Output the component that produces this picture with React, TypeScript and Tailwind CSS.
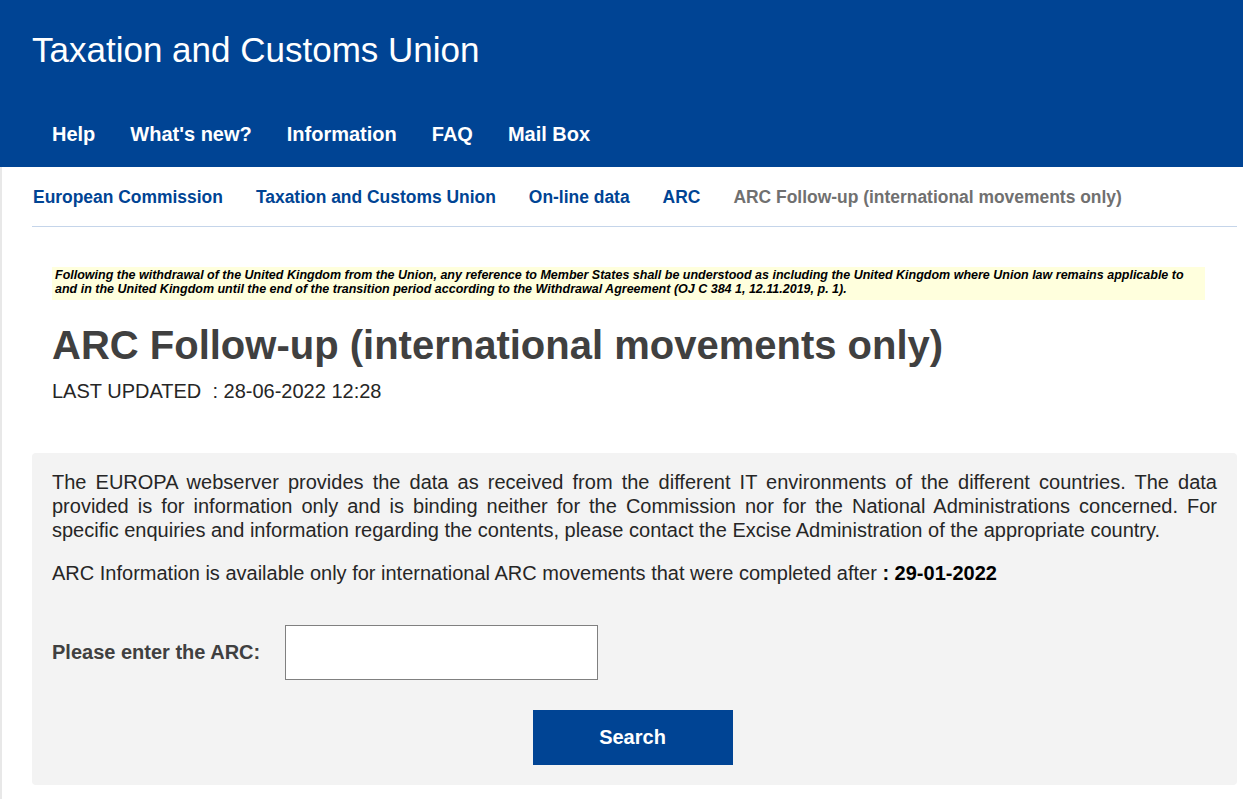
import React from "react";

const CRUMBS = ["European Commission", "Taxation and Customs Union", "On-line data", "ARC"];
const MENU = ["Help", "What's new?", "Information", "FAQ", "Mail Box"];

export default function App() {
  return (
    <div className="font-['Liberation_Sans',Arial,sans-serif] text-[#404040] bg-white h-[799px] overflow-hidden">
      {/* Header */}
      <header className="bg-[#004494] h-[167px] text-white">
        <div className="pl-[32px] pt-[30px] text-[35px] leading-[40px]">Taxation and Customs Union</div>
        <nav className="flex gap-[35px] pl-[52px] mt-[34px] text-[20px] font-bold leading-[60px]">
          {MENU.map((item) => (
            <span key={item}>{item}</span>
          ))}
        </nav>
      </header>

      <div className="border-l-2 border-[#e8e8e8] h-[632px]">
        {/* Breadcrumb */}
        <div className="ml-[30px] mr-[6px] h-[60px] pt-[1px] pl-[1px] border-b border-[#c5d5ea] flex items-center gap-[33px] text-[17.44px] font-bold">
          {CRUMBS.map((item) => (
            <span key={item} className="text-[#004494]">{item}</span>
          ))}
          <span className="text-[#707070]">ARC Follow-up (international movements only)</span>
        </div>

        <div className="pl-[50px] pr-[38px] pt-[40px]">
          <div className="bg-[#ffffdd] h-[33px] pl-[3px] pt-[1px] text-[12.5px] leading-[14px] italic font-bold text-black">
            Following the withdrawal of the United Kingdom from the Union, any reference to Member States shall be understood as including the United Kingdom where Union law remains applicable to and in the United Kingdom until the end of the transition period according to the Withdrawal Agreement (OJ C 384 1, 12.11.2019, p. 1).
          </div>
          <h1 className="text-[40px] font-bold leading-[46px] mt-[22px]">ARC Follow-up (international movements only)</h1>
          <div className="text-[20px] leading-[24px] mt-[11px] text-[#262626] whitespace-pre">LAST UPDATED  : 28-06-2022 12:28</div>
        </div>

        {/* Search panel */}
        <section className="ml-[30px] mr-[6px] mt-[50px] h-[332px] bg-[#f3f3f3] rounded-[4px] px-[20px] pt-[17px] text-[20px] leading-[24px] text-[#262626]">
          <p className="text-justify">
            The EUROPA webserver provides the data as received from the different IT environments of the different countries. The data provided is for information only and is binding neither for the Commission nor for the National Administrations concerned. For specific enquiries and information regarding the contents, please contact the Excise Administration of the appropriate country.
          </p>
          <p className="mt-[19px]">
            ARC Information is available only for international ARC movements that were completed after <b className="text-black">: 29-01-2022</b>
          </p>
          <div className="flex items-center mt-[40px]">
            <label className="font-bold text-[#404040] w-[233px] pb-[1px]">Please enter the ARC:</label>
            <input type="text" className="w-[313px] h-[55px] bg-white border border-[#808080]" aria-label="ARC" />
          </div>
          <div className="flex justify-center mt-[30px]">
            <button type="button" className="w-[200px] h-[55px] pb-[2px] bg-[#004494] text-white font-bold ml-[-4px]">Search</button>
          </div>
        </section>
      </div>
    </div>
  );
}
